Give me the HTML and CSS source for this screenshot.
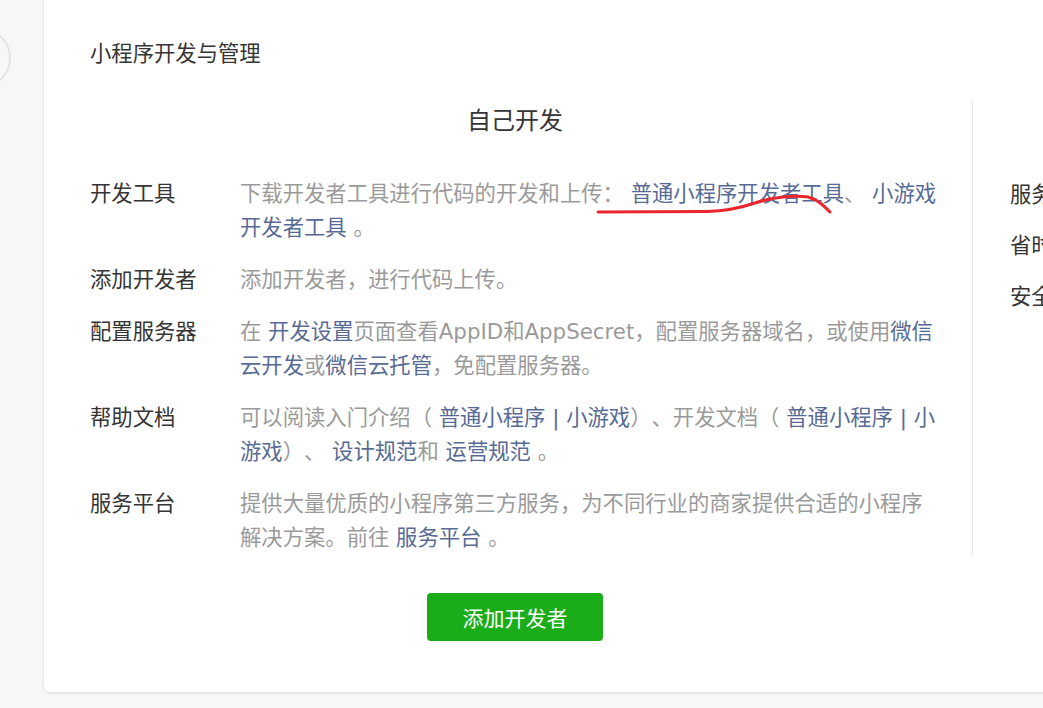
FILE: index.html
```html
<!DOCTYPE html>
<html lang="zh-CN">
<head>
<meta charset="utf-8">
<title>小程序开发与管理</title>
<link rel="stylesheet" href="styles.css">
</head>
<body>
<div class="avatar"></div>
<div class="card">
  <div class="card-title">小程序开发与管理</div>
  <div class="columns">
    <div class="col-main">
      <div class="col-heading">自己开发</div>
      <div class="rows">
        <div class="row">
          <div class="label">开发工具</div>
          <div class="desc">下载开发者工具进行代码的开发和上传： <a class="lnk">普通小程序开发者工具</a>、 <a class="lnk">小游戏开发者工具</a> 。</div>
        </div>
        <div class="row">
          <div class="label">添加开发者</div>
          <div class="desc">添加开发者，进行代码上传。</div>
        </div>
        <div class="row">
          <div class="label">配置服务器</div>
          <div class="desc">在 <a class="lnk">开发设置</a>页面查看AppID和AppSecret，配置服务器域名，或使用<a class="lnk">微信云开发</a>或<a class="lnk">微信云托管</a>，免配置服务器。</div>
        </div>
        <div class="row">
          <div class="label">帮助文档</div>
          <div class="desc">可以阅读入门介绍（ <a class="lnk">普通小程序</a> <span class="lnk">|</span> <a class="lnk">小游戏</a>）、开发文档（ <a class="lnk">普通小程序</a> <span class="lnk">|</span> <a class="lnk">小游戏</a>）、 <a class="lnk">设计规范</a>和 <a class="lnk">运营规范</a> 。</div>
        </div>
        <div class="row">
          <div class="label">服务平台</div>
          <div class="desc">提供大量优质的小程序第三方服务，为不同行业的商家提供合适的小程序解决方案。前往 <a class="lnk">服务平台</a> 。</div>
        </div>
      </div>
    </div>
    <div class="col-side">
      <div class="side-item">服务商开发</div>
      <div class="side-item">省时省力</div>
      <div class="side-item">安全可靠</div>
    </div>
  </div>
  <div class="actions">
    <button class="btn-primary">添加开发者</button>
  </div>
  <svg class="scribble" width="240" height="24" viewBox="0 0 240 24">
    <path d="M3 20 L112 19.5 C132 19 145 16 160 11 C178 5 200 3 213 5 C222 7 229 14 235 20" fill="none" stroke="#e8262b" stroke-width="3" stroke-linecap="round" stroke-linejoin="round"/>
  </svg>
</div>
</body>
</html>
```

FILE: styles.css
```css
html, body {
  margin: 0;
  padding: 0;
  height: 100%;
  overflow: hidden;
}
body {
  background: #f6f7f9;
  font-family: "DejaVu Sans", "Noto Sans CJK SC", sans-serif;
  color: #353535;
  font-size: 21.33px;
  line-height: 34px;
  position: relative;
  text-spacing-trim: space-all;
}
.avatar {
  position: absolute;
  left: -49px;
  top: 28px;
  width: 56px;
  height: 56px;
  border: 2px solid #e3e4e6;
  border-radius: 50%;
}
.card {
  position: relative;
  margin-left: 44px;
  margin-top: -10px;
  width: 1100px;
  background: #fff;
  border-radius: 6px;
  box-shadow: 0 1px 3px rgba(0, 0, 0, 0.12);
  padding: 47px 0 51px 46px;
  box-sizing: border-box;
}
.card-title {
  color: #353535;
  line-height: 33.6px;
}
.columns {
  display: flex;
  margin-top: 29px;
}
.col-main {
  width: 850px;
  padding-right: 32px;
  border-right: 1px solid #e7e7eb;
}
.col-heading {
  text-align: center;
  font-size: 24px;
  line-height: 42px;
  color: #353535;
}
.rows {
  display: flex;
  flex-direction: column;
  gap: 18px;
  margin-top: 35px;
}
.row {
  display: flex;
}
.label {
  width: 150px;
  flex-shrink: 0;
  color: #353535;
}
.desc {
  flex: 1;
  min-width: 0;
  color: #9a9a9a;
}
.lnk {
  color: #576b95;
  text-decoration: none;
}
.col-side {
  padding-left: 37px;
  padding-top: 78px;
  display: flex;
  flex-direction: column;
  gap: 17px;
  white-space: nowrap;
}
.side-item {
  color: #353535;
}
.actions {
  width: 850px;
  display: flex;
  justify-content: center;
  margin-top: 38px;
}
.btn-primary {
  width: 176px;
  height: 48px;
  border: 0;
  border-radius: 4px;
  background: #1aad19;
  color: #fff;
  font-family: "Noto Sans CJK SC", sans-serif;
  font-size: 21px;
  padding: 0;
}
.scribble {
  position: absolute;
  left: 551px;
  top: 202px;
}
```
